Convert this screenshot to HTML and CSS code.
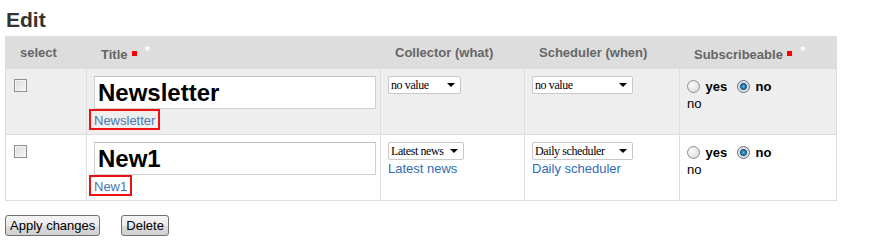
FILE: index.html
```html
<!DOCTYPE html>
<html lang="en">
<head>
  <meta charset="UTF-8">
  <title>Edit</title>
  <link rel="stylesheet" href="styles.css">
</head>
<body>

  <h2 class="page-title">Edit</h2>

  <table class="edit-table">
    <colgroup>
      <col class="c-select">
      <col class="c-title">
      <col class="c-collector">
      <col class="c-scheduler">
      <col class="c-sub">
    </colgroup>
    <thead>
      <tr>
        <th>select</th>
        <th>Title <span class="req"></span><span class="star">*</span></th>
        <th>Collector (what)</th>
        <th>Scheduler (when)</th>
        <th>Subscribeable <span class="req"></span><span class="star">*</span></th>
      </tr>
    </thead>
    <tbody>
      <tr class="odd">
        <td><input type="checkbox" class="chk"></td>
        <td>
          <input type="text" class="title-input" value="Newsletter">
          <a href="#" class="val-link">Newsletter</a>
        </td>
        <td>
          <span class="sel w-short"><select><option>no value</option></select></span>
        </td>
        <td>
          <span class="sel w-long"><select><option>no value</option></select></span>
        </td>
        <td>
          <div class="radios">
            <label><input type="radio" name="s1"> yes</label>
            <label><input type="radio" name="s1" checked> no</label>
          </div>
          <div class="plain">no</div>
        </td>
      </tr>
      <tr class="even">
        <td><input type="checkbox" class="chk"></td>
        <td>
          <input type="text" class="title-input" value="New1">
          <a href="#" class="val-link">New1</a>
        </td>
        <td>
          <span class="sel w-mid"><select><option>Latest news</option></select></span>
          <div><a href="#" class="ref">Latest news</a></div>
        </td>
        <td>
          <span class="sel w-long"><select><option>Daily scheduler</option></select></span>
          <div><a href="#" class="ref">Daily scheduler</a></div>
        </td>
        <td>
          <div class="radios">
            <label><input type="radio" name="s2"> yes</label>
            <label><input type="radio" name="s2" checked> no</label>
          </div>
          <div class="plain">no</div>
        </td>
      </tr>
    </tbody>
  </table>

  <div class="actions">
    <button>Apply changes</button>
    <button>Delete</button>
  </div>

</body>
</html>
```

FILE: styles.css
```css
body {
  margin: 5px;
  font-family: 'Liberation Sans', Arial, sans-serif;
  font-size: 13px;
  color: #000;
}

.page-title {
  font-size: 21px;
  font-weight: bold;
  color: #333;
  margin: 3px 0 4px 1px;
  line-height: 24px;
}

.edit-table {
  width: 831px;
  border-collapse: collapse;
  table-layout: fixed;
  border: 1px solid #dddddd;
}

.c-select { width: 81px; }
.c-title { width: 294px; }
.c-collector { width: 144px; }
.c-scheduler { width: 155px; }
.c-sub { width: 157px; }

.edit-table th {
  background-color: #dddddd;
  color: #666;
  font-weight: bold;
  text-align: left;
  height: 31px;
  padding: 0 14px;
  border: 1px solid #dddddd;
  border-left-color: #e8e8e8;
}

.edit-table th:first-child {
  border-left-color: #dddddd;
}

.req {
  display: inline-block;
  width: 5px;
  height: 5px;
  background-color: #ff0000;
  margin-left: 1px;
  vertical-align: 3px;
}

.star {
  color: #fff;
  margin-left: 8px;
  font-size: 12px;
  vertical-align: 4px;
}

.edit-table td {
  vertical-align: top;
  padding: 7px 7px 4px;
  border: 1px solid #dddddd;
}

.odd td {
  background-color: #eeeeee;
}

.even td {
  background-color: #fff;
}

.chk {
  -webkit-appearance: none;
  appearance: none;
  display: block;
  margin: 3px 0 0 1px;
  width: 13px;
  height: 13px;
  border: 1px solid #8e8f8f;
  background: linear-gradient(135deg, #dcdcdc, #f6f6f6);
  box-shadow: inset 0 0 0 1px #f4f4f4;
}

.title-input {
  display: block;
  box-sizing: border-box;
  width: 282px;
  height: 33px;
  margin: 0;
  padding: 0 3px;
  border: 1px solid #cfcfcf;
  border-top-color: #c2c2c2;
  background: #fff;
  font-family: 'Liberation Sans', Arial, sans-serif;
  font-size: 24px;
  font-weight: bold;
  color: #000;
}

.val-link {
  display: block;
  width: fit-content;
  margin-left: -5px;
  border: 2px solid #ee1111;
  padding: 2px 3px 0;
  line-height: 15px;
  color: #4a76b0;
  text-decoration: none;
}

.sel {
  position: relative;
  display: inline-block;
  vertical-align: top;
}

.sel select {
  -webkit-appearance: none;
  appearance: none;
  display: block;
  height: 18px;
  margin: 0;
  padding: 0 14px 0 2px;
  border: 1px solid #c8c8c8;
  border-radius: 2px;
  background: #fff;
  font-family: 'Liberation Serif', 'Times New Roman', serif;
  font-size: 12px;
  letter-spacing: -0.4px;
  color: #000;
  box-sizing: border-box;
}

.sel::after {
  content: "";
  position: absolute;
  right: 6px;
  top: 7px;
  border-left: 4px solid transparent;
  border-right: 4px solid transparent;
  border-top: 4px solid #000;
  pointer-events: none;
}

.w-short select { width: 73px; }
.w-mid select { width: 76px; }
.w-long select { width: 101px; }

.ref {
  display: inline-block;
  color: #2f6bb8;
  text-decoration: none;
  line-height: 16px;
  margin-top: 1px;
}

.radios {
  margin-top: 3px;
  font-weight: bold;
  line-height: 16px;
}

.radios label {
  margin-right: 6px;
}

.radios input {
  -webkit-appearance: none;
  appearance: none;
  display: inline-block;
  box-sizing: border-box;
  margin: 0 2px 0 0;
  width: 13px;
  height: 13px;
  border: 1px solid #8e8f8f;
  border-radius: 50%;
  background: radial-gradient(circle at 35% 35%, #fcfcfc, #d4d4d4);
  vertical-align: -2px;
}

.radios input:checked {
  background: radial-gradient(circle, #62c0ee 0, #1b75b8 2px, #245b84 3px, #d8d8d8 4px, #f4f4f4 6px);
  border-color: #5a6d7c;
}

.plain {
  line-height: 18px;
}

.actions {
  margin-top: 14px;
  display: flex;
  gap: 21px;
}

button {
  font-family: 'Liberation Sans', Arial, sans-serif;
  font-size: 13px;
  color: #000;
  height: 21px;
  padding: 0 4px;
  border: 1px solid #707070;
  border-radius: 3px;
  background: linear-gradient(#f3f3f3, #ebebeb 50%, #dddddd 51%, #cfcfcf);
}
```
